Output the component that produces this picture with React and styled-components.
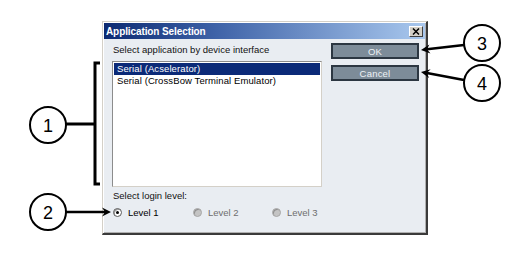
import React from "react";
import styled, { createGlobalStyle } from "styled-components";

const GlobalStyle = createGlobalStyle`
  html, body {
    margin: 0;
    padding: 0;
    background: #ffffff;
  }
  * {
    box-sizing: border-box;
  }
`;

const Page = styled.div`
  position: relative;
  width: 520px;
  height: 255px;
  padding: 21px 0 0 102px;
  font-family: "Liberation Sans", Arial, sans-serif;
`;

const Dialog = styled.div`
  width: 326px;
  height: 214px;
  display: flex;
  flex-direction: column;
  background: #e9edf2;
  border-style: solid;
  border-width: 1px 2px 2px 1px;
  border-color: #d4d0c8 #3a3a3a #3a3a3a #d4d0c8;
  box-shadow: inset 1px 1px 0 #ffffff, inset -1px -1px 0 #b0b0b0;
`;

const TitleBar = styled.div`
  height: 16px;
  margin: 1px 1px 0 1px;
  display: flex;
  align-items: center;
  justify-content: space-between;
  padding: 0 2px 0 2px;
  background: linear-gradient(to right, #0c2a72 0%, #3f63a8 35%, #a9c8ee 100%);
`;

const Title = styled.span`
  color: #ffffff;
  font-weight: bold;
  font-size: 10px;
  letter-spacing: -0.1px;
`;

const CloseButton = styled.div`
  width: 14px;
  height: 11px;
  display: grid;
  place-items: center;
  background: #d4d0c8;
  border: 1px solid;
  border-color: #ffffff #404040 #404040 #ffffff;
`;

const Body = styled.div`
  flex: 1;
  display: flex;
  gap: 9px;
  padding: 4px 6px 0 9px;
`;

const LeftCol = styled.div`
  width: 210px;
  display: flex;
  flex-direction: column;
`;

const Label = styled.div`
  font-size: 9.5px;
  line-height: 12px;
  color: #111;
  margin-top: ${(p) => p.$top || 0}px;
  padding-left: 1px;
`;

const ListBox = styled.div`
  margin-top: 5px;
  height: 126px;
  background: #ffffff;
  border: 1px solid;
  border-color: #8c8c8c #d4d0c8 #d4d0c8 #8c8c8c;
  padding: 1px 1px;
`;

const ListItem = styled.div`
  height: 12px;
  line-height: 12px;
  font-size: 9.5px;
  padding-left: 3px;
  letter-spacing: 0.1px;
  color: ${(p) => (p.$selected ? "#ffffff" : "#000000")};
  background: ${(p) => (p.$selected ? "#0b2a78" : "transparent")};
`;

const RadioRow = styled.div`
  margin-top: 4px;
  display: grid;
  grid-template-columns: 80px 79px 80px;
  padding-left: 1px;
`;

const RadioOption = styled.div`
  display: flex;
  align-items: center;
  gap: 6px;
  height: 12px;
  font-size: 9.5px;
  color: ${(p) => (p.$disabled ? "#6e6e6e" : "#000000")};
`;

const RadioDot = styled.span`
  width: 9px;
  height: 9px;
  border-radius: 50%;
  display: grid;
  place-items: center;
  border: 1px solid ${(p) => (p.$disabled ? "#a8a8a8" : "#5a5a5a")};
  background: ${(p) => (p.$disabled ? "#c4c4c4" : "#ffffff")};
  box-shadow: inset 1px 1px 0 ${(p) => (p.$disabled ? "#8e8e8e" : "#a0a0a0")};

  &::after {
    content: "";
    width: 3px;
    height: 3px;
    border-radius: 50%;
    background: #000000;
    display: ${(p) => (p.$checked ? "block" : "none")};
  }
`;

const RightCol = styled.div`
  display: flex;
  flex-direction: column;
  gap: 6px;
`;

const Button = styled.div`
  width: 88px;
  height: 16px;
  display: grid;
  place-items: center;
  background: #7d8c99;
  border: 2px solid #2c3742;
  color: #eef2f5;
  font-size: 9.5px;
  letter-spacing: 0.2px;
`;

const Annotations = styled.svg`
  position: absolute;
  left: 0;
  top: 0;
  pointer-events: none;
  font-family: "Liberation Sans", Arial, sans-serif;
`;

const callouts = [
  { n: "1", x: 48, y: 125 },
  { n: "2", x: 48, y: 212 },
  { n: "3", x: 482, y: 43 },
  { n: "4", x: 482, y: 83 },
];

const Arrow = ({ x1, y1, x2, y2 }) => {
  const a = Math.atan2(y2 - y1, x2 - x1);
  const len = 9;
  const w = 4.5;
  const bx = x2 - Math.cos(a) * len;
  const by = y2 - Math.sin(a) * len;
  const nx = x2 - Math.cos(a) * (len - 3);
  const ny = y2 - Math.sin(a) * (len - 3);
  const px = -Math.sin(a) * w;
  const py = Math.cos(a) * w;
  return (
    <g>
      <line x1={x1} y1={y1} x2={nx} y2={ny} stroke="#000" strokeWidth="2.5" />
      <polygon
        points={`${x2},${y2} ${bx + px},${by + py} ${nx},${ny} ${bx - px},${by - py}`}
        fill="#000"
      />
    </g>
  );
};

const App = () => {
  return (
    <>
      <GlobalStyle />
      <Page>
        <Dialog>
          <TitleBar>
            <Title>Application Selection</Title>
            <CloseButton>
              <svg width="8" height="7" viewBox="0 0 8 7">
                <path d="M1 0.5 L7 6.5 M7 0.5 L1 6.5" stroke="#000" strokeWidth="1.5" />
              </svg>
            </CloseButton>
          </TitleBar>
          <Body>
            <LeftCol>
              <Label $top={1}>Select application by device interface</Label>
              <ListBox>
                <ListItem $selected>Serial (Acselerator)</ListItem>
                <ListItem>Serial (CrossBow Terminal Emulator)</ListItem>
              </ListBox>
              <Label $top={3}>Select login level:</Label>
              <RadioRow>
                <RadioOption>
                  <RadioDot $checked />
                  Level 1
                </RadioOption>
                <RadioOption $disabled>
                  <RadioDot $disabled />
                  Level 2
                </RadioOption>
                <RadioOption $disabled>
                  <RadioDot $disabled />
                  Level 3
                </RadioOption>
              </RadioRow>
            </LeftCol>
            <RightCol>
              <Button>OK</Button>
              <Button>Cancel</Button>
            </RightCol>
          </Body>
        </Dialog>

        <Annotations width="520" height="255" viewBox="0 0 520 255">
          {/* bracket for the list box */}
          <path d="M100 63 H95 V184 H100" fill="none" stroke="#000" strokeWidth="3" />
          <line x1="66" y1="124" x2="95" y2="124" stroke="#000" strokeWidth="3" />
          <Arrow x1={66} y1={212} x2={111} y2={212} />
          <Arrow x1={464} y1={45} x2={421} y2={50} />
          <Arrow x1={464} y1={80} x2={421} y2={72} />
          {callouts.map((c) => (
            <g key={c.n}>
              <circle cx={c.x} cy={c.y} r="18" fill="#fff" stroke="#000" strokeWidth="2" />
              <text
                x={c.x}
                y={c.y + 6.5}
                textAnchor="middle"
                fontSize="18"
                fill="#000"
              >
                {c.n}
              </text>
            </g>
          ))}
        </Annotations>
      </Page>
    </>
  );
};

export default App;
